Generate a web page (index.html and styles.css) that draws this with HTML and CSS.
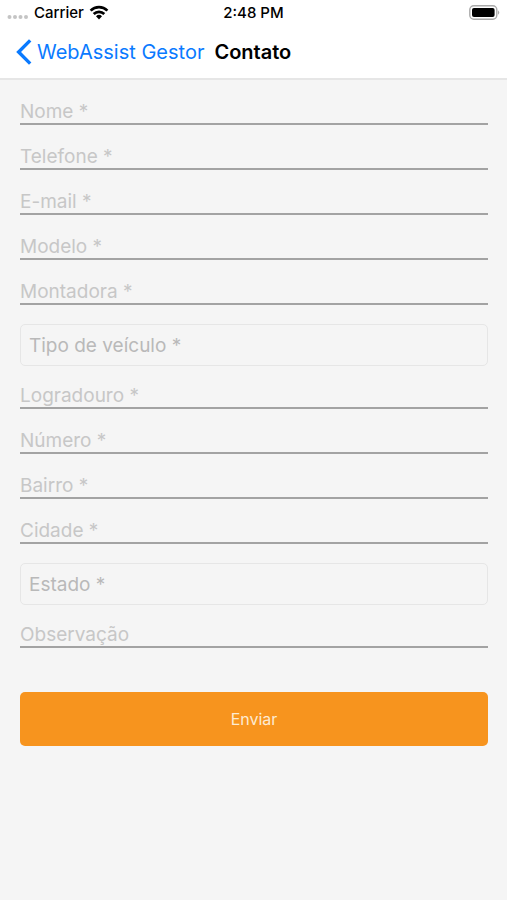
FILE: index.html
```
<!DOCTYPE html>
<html lang="pt-BR">
<head>
<meta charset="UTF-8">
<meta name="viewport" content="width=device-width, initial-scale=1.0">
<title>Contato</title>
<link rel="stylesheet" href="styles.css">
</head>
<body>
  <!-- Barra de status -->
  <div class="status">
    <div class="operadora">
      <svg class="sinal" width="22" height="6" viewBox="0 0 22 6" fill="#c4c4c4">
        <circle cx="2.5" cy="3" r="2"/>
        <circle cx="8" cy="3" r="2"/>
        <circle cx="13.5" cy="3" r="2"/>
        <circle cx="19" cy="3" r="2"/>
      </svg>
      <span>Carrier</span>
      <svg class="wifi" width="20" height="15" viewBox="0 0 20 15" fill="none" stroke="#000" stroke-width="2.7">
        <path d="M1.6 5.6a12 12 0 0 1 16.8 0"/>
        <path d="M4.7 9a7.6 7.6 0 0 1 10.6 0"/>
        <path d="M10 14.4L7 11.3a4.3 4.3 0 0 1 6 0z" fill="#000" stroke="none"/>
      </svg>
    </div>
    <div class="hora">2:48 PM</div>
    <div class="bateria">
      <svg width="31" height="15" viewBox="0 0 31 15">
        <rect x="0.8" y="0.8" width="27" height="13.4" rx="4" fill="#fff" stroke="#aaa" stroke-width="1.4"/>
        <rect x="3" y="3" width="22.6" height="9" rx="2" fill="#000"/>
        <path d="M29.2 5.2q2 2.3 0 4.6z" fill="#999"/>
      </svg>
    </div>
  </div>
  <!-- Barra de navegação -->
  <header class="barra">
    <a class="voltar" href="#">
      <svg width="16" height="26" viewBox="0 0 16 26" fill="none" stroke="#0a7aff" stroke-width="3.4">
        <path d="M14.2 1.4L2.6 13l11.6 11.6"/>
      </svg>
      <span>WebAssist Gestor</span>
    </a>
    <h1>Contato</h1>
  </header>
  <!-- Formulário de contato -->
  <form class="formulario">
    <input class="campo" type="text" name="nome" placeholder="Nome *" aria-label="Nome">
    <input class="campo" type="tel" name="telefone" placeholder="Telefone *" aria-label="Telefone">
    <input class="campo" type="email" name="email" placeholder="E-mail *" aria-label="E-mail">
    <input class="campo" type="text" name="modelo" placeholder="Modelo *" aria-label="Modelo">
    <input class="campo" type="text" name="montadora" placeholder="Montadora *" aria-label="Montadora">
    <select class="selecao" name="tipo" aria-label="Tipo de veículo">
      <option value="">Tipo de veículo *</option>
    </select>
    <input class="campo" type="text" name="logradouro" placeholder="Logradouro *" aria-label="Logradouro">
    <input class="campo" type="text" name="numero" placeholder="Número *" aria-label="Número">
    <input class="campo" type="text" name="bairro" placeholder="Bairro *" aria-label="Bairro">
    <input class="campo" type="text" name="cidade" placeholder="Cidade *" aria-label="Cidade">
    <select class="selecao" name="estado" aria-label="Estado">
      <option value="">Estado *</option>
    </select>
    <input class="campo" type="text" name="observacao" placeholder="Observação" aria-label="Observação">
    <button class="enviar" type="submit">Enviar</button>
  </form>
</body>
</html>
```
FILE: styles.css
```
* {
  box-sizing: border-box;
}
body {
  margin: 0;
  min-height: 100vh;
  background: #f5f5f5;
  font-family: Inter, "Liberation Sans", sans-serif;
}
/* Barra de status */
.status {
  display: grid;
  grid-template-columns: 1fr auto 1fr;
  align-items: center;
  height: 25px;
  padding: 0 7px;
  background: #fff;
  font-size: 15px;
  font-weight: 500;
}
.operadora {
  display: flex;
  align-items: center;
  gap: 5px;
}
.sinal {
  margin-top: 8px;
}
.bateria {
  display: flex;
  justify-content: flex-end;
}
/* Barra de navegação */
.barra {
  display: flex;
  align-items: center;
  gap: 10px;
  height: 55px;
  padding: 1px 16px 0;
  background: #fff;
  border-bottom: 2px solid #e6e6e6;
}
.voltar {
  display: flex;
  align-items: center;
  gap: 5px;
  color: #0a7aff;
  font-size: 20px;
  text-decoration: none;
}
.barra h1 {
  margin: 0;
  font-size: 20px;
  font-weight: 600;
}
/* Formulário */
.formulario {
  display: flex;
  flex-direction: column;
  padding: 21px 19px 21px 20px;
}
.campo,
.selecao {
  width: 100%;
  background: transparent;
  font-family: inherit;
  font-size: 19px;
  border-radius: 0;
  outline: none;
}
.campo {
  height: 24px;
  padding: 0 0 2px;
  border: 0;
  border-bottom: 2px solid #a3a3a3;
}
.campo::placeholder {
  color: #c7c7c7;
}
.campo + .campo {
  margin-top: 21px;
}
.selecao {
  appearance: none;
  height: 42px;
  padding: 0 8px;
  border: 1px solid #e6e6e6;
  border-radius: 5px;
  color: #b9b9b9;
}
.campo + .selecao,
.selecao + .campo {
  margin-top: 19px;
}
.enviar {
  height: 54px;
  margin-top: 44px;
  border: 0;
  border-radius: 5px;
  background: #f7941e;
  color: #fdebd2;
  font-family: inherit;
  font-size: 16px;
}
```
